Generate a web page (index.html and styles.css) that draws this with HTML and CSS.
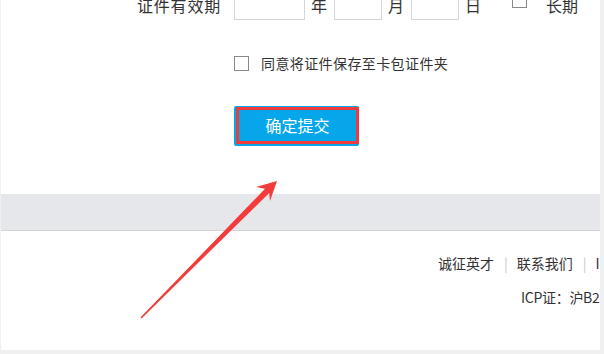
FILE: index.html
```html
<!DOCTYPE html>
<html>

<head>
  <meta charset="UTF-8" />
  <title>证件信息</title>

  <link rel="stylesheet" href="styles.css">
</head>

<body>
  <div class="page">
    <div class="form">
      <div class="row row-date">
        <span class="label">证件有效期</span>
        <span class="input w-year"></span>
        <span class="unit">年</span>
        <span class="input w-day"></span>
        <span class="unit">月</span>
        <span class="input w-day"></span>
        <span class="unit">日</span>
        <span class="check check-long"></span>
        <span class="unit">长期</span>
      </div>
      <div class="row row-agree">
        <span class="label"></span>
        <span class="check"></span>
        <span class="agree-text">同意将证件保存至卡包证件夹</span>
      </div>
      <div class="row row-submit">
        <span class="label"></span>
        <div class="btn">
          <div class="btn-mark">确定提交</div>
        </div>
      </div>
    </div>

    <div class="band"></div>

    <div class="footer">
      <div class="links">
        <a>诚征英才</a><span class="sep">|</span><a>联系我们</a><span class="sep">|</span><a>ICP</a>
      </div>
      <div class="icp">ICP证：沪B2-20100257</div>
    </div>
  </div>

  <svg class="arrow" width="604" height="354" viewBox="0 0 604 354">
    <polygon fill="#f33b3b" points="277,181 270,201 269.2,193 141.6,318.4 140.4,317.6 265,188.8 256,187" />
  </svg>
</body>

</html>
```

FILE: styles.css
```css
body {
  margin: 0;
  position: relative;
  width: 604px;
  height: 354px;
  overflow: hidden;
  background: #f0f0f1;
  font-family: "Noto Sans CJK SC", "Microsoft YaHei", sans-serif;
  color: #333;
}

.page {
  margin-left: 1px;
  width: 599px;
  height: 350px;
  background: #fff;
  overflow: hidden;
}

.form {
  margin-top: -11px;

  .row {
    display: flex;
    align-items: center;
  }

  .label {
    width: 220px;
    flex: none;
    margin-right: 13px;
    text-align: right;
    font-size: 16px;
    letter-spacing: 0.8px;
  }
}

.row-date {
  height: 31px;

  .input {
    height: 29px;
    border: 1px solid #d6d6d6;
    box-sizing: content-box;
  }

  .w-year {
    width: 69px;
  }

  .w-day {
    width: 46px;
  }

  .unit {
    font-size: 16px;
    margin: 0 7px 0 6px;
  }

  .check-long {
    margin: 0 13px 0 24px;
    align-self: flex-start;
    margin-top: 4px;
  }
}

.check {
  width: 13px;
  height: 13px;
  border: 1px solid #8a8a8a;
  flex: none;
}

.row-agree {
  margin-top: 33px;
  height: 20px;

  .agree-text {
    margin-left: 12px;
    font-size: 14px;
    letter-spacing: 0.4px;
  }
}

.row-submit {
  margin-top: 33px;
}

.btn {
  width: 123px;
  height: 37px;
  padding: 1px 0 2px 2px;
  background: #05a6ea;
  border-radius: 2px;

  .btn-mark {
    height: 31px;
    border: 3px solid #ee3b3e;
    color: #fff;
    font-size: 16px;
    line-height: 31px;
    text-align: center;
  }
}

.band {
  margin-top: 48px;
  height: 36px;
  background: #e6e7ea;
  border-bottom: 1px solid #d4d4d6;
}

.footer {
  white-space: nowrap;
  font-size: 14px;

  .links {
    margin-top: 22px;
    padding-left: 437px;
    line-height: 20px;
  }

  .sep {
    color: #c8c8c8;
    margin: 0 9px 0 10px;
  }

  .icp {
    margin-top: 14px;
    padding-left: 520px;
    line-height: 20px;
    letter-spacing: -0.3px;
  }
}

.arrow {
  position: absolute;
  left: 0;
  top: 0;
}
```
